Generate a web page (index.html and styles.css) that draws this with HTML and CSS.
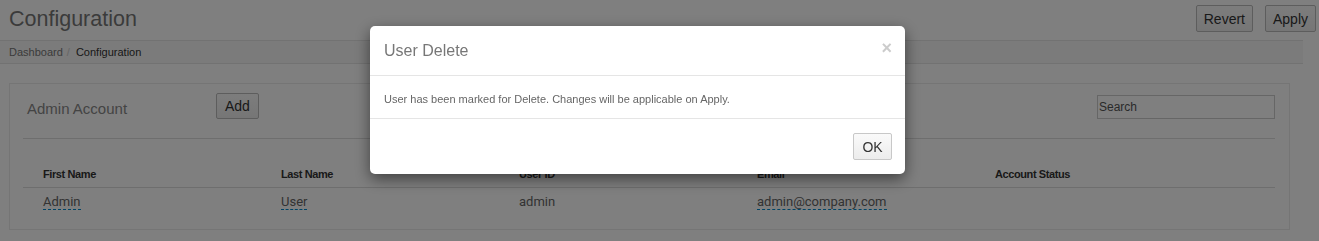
FILE: index.html
```html
<!DOCTYPE html>
<html lang="en">
<head>
    <meta charset="UTF-8">
    <meta name="viewport" content="width=device-width, initial-scale=1.0">
    <title>Configuration</title>
    <link rel="stylesheet" href="styles.css">
</head>
<body>
    <div class="page-header">
        <h1 class="page-title">Configuration</h1>
        <div class="header-actions">
            <button class="btn">Revert</button>
            <button class="btn">Apply</button>
        </div>
    </div>

    <div class="breadcrumb">
        <a href="#" class="crumb-link">Dashboard</a>
        <span class="crumb-sep">/</span>
        <span class="crumb-current">Configuration</span>
    </div>

    <div class="panel">
        <div class="panel-toolbar">
            <div class="toolbar-left">
                <h2 class="panel-title">Admin Account</h2>
                <button class="btn btn-small">Add</button>
            </div>
            <input type="text" class="search-input" placeholder="Search">
        </div>
        <div class="panel-rule"></div>

        <table class="user-table">
            <thead>
                <tr>
                    <th>First Name</th>
                    <th>Last Name</th>
                    <th>User ID</th>
                    <th>Email</th>
                    <th>Account Status</th>
                    <th></th>
                </tr>
            </thead>
            <tbody>
                <tr>
                    <td><a href="#" class="editable">Admin</a></td>
                    <td><a href="#" class="editable">User</a></td>
                    <td>admin</td>
                    <td><a href="#" class="editable">admin@company.com</a></td>
                    <td></td>
                    <td></td>
                </tr>
            </tbody>
        </table>
    </div>

    <!-- Modal de confirmación -->
    <div class="modal-backdrop"></div>
    <div class="modal">
        <div class="modal-header">
            <h4 class="modal-title">User Delete</h4>
            <button class="modal-close">&times;</button>
        </div>
        <div class="modal-body">
            User has been marked for Delete. Changes will be applicable on Apply.
        </div>
        <div class="modal-footer">
            <button class="btn btn-ok">OK</button>
        </div>
    </div>
</body>
</html>
```

FILE: styles.css
```css
/* Estilos básicos */
body, html {
    margin: 0;
    padding: 0;
    background-color: #fff;
    font-family: "Liberation Sans", Arial, sans-serif;
    color: #333;
}

.page-header {
    display: flex;
    justify-content: space-between;
    align-items: flex-start;
    height: 40px;
    padding: 0 3px 0 9px;
    box-sizing: border-box;
}

.page-title {
    margin: 7px 0 0 0;
    font-size: 21.5px;
    font-weight: normal;
    line-height: 25px;
    color: #777;
}

.header-actions {
    display: flex;
    gap: 12px;
    padding-top: 5px;
}

.btn {
    font-family: "Liberation Sans", Arial, sans-serif;
    font-size: 14px;
    color: #333;
    background: linear-gradient(#fafafa, #ececec);
    border: 1px solid #bbb;
    border-radius: 2px;
    height: 27px;
    padding: 0 7px;
    cursor: pointer;
}

.breadcrumb {
    width: 1303px;
    height: 24px;
    box-sizing: border-box;
    border-top: 1px solid #e4e4e4;
    border-bottom: 1px solid #e4e4e4;
    background-color: #f6f6f6;
    padding-left: 9px;
    display: flex;
    align-items: center;
    font-size: 11px;
}

.crumb-link {
    color: #777;
    text-decoration: none;
}

.crumb-sep {
    color: #ccc;
    margin: 0 6px 0 4px;
}

.crumb-current {
    color: #333;
}

.panel {
    margin: 19px 0 0 9px;
    width: 1281px;
    box-sizing: border-box;
    border: 1px solid #eaeaea;
    padding: 9px 14px 13px 13px;
}

.panel-toolbar {
    display: flex;
    justify-content: space-between;
    align-items: center;
    height: 26px;
}

.toolbar-left {
    display: flex;
    align-items: center;
}

.panel-title {
    margin: 4px 0 0 4px;
    width: 189px;
    font-size: 15px;
    font-weight: normal;
    color: #888;
}

.btn-small {
    height: 26px;
    padding: 0 8px;
}

.search-input {
    width: 178px;
    height: 24px;
    box-sizing: border-box;
    border: 1px solid #ccc;
    padding: 0 1px;
    font-size: 12px;
    font-family: "Liberation Sans", Arial, sans-serif;
    margin-top: 1px;
}

.search-input::placeholder {
    color: #555;
}

.panel-rule {
    margin-top: 19px;
    border-top: 1px solid #ddd;
}

.user-table {
    margin-top: 17px;
    width: 100%;
    border-collapse: collapse;
    table-layout: fixed;
}

.user-table th {
    text-align: left;
    font-size: 11px;
    font-weight: bold;
    color: #333;
    letter-spacing: -0.4px;
    width: 218px;
    padding: 10px 0 5px 20px;
    line-height: 16px;
    border-bottom: 1px solid #ddd;
}

.user-table th:last-child {
    width: auto;
}

.user-table td {
    font-family: Roboto, "Liberation Sans", sans-serif;
    font-size: 13px;
    color: #666;
    padding: 5px 0 5px 20px;
    line-height: 18px;
}

.editable {
    color: #666;
    text-decoration: none;
    border-bottom: 1px dashed #08c;
}

/* Ventana modal */
.modal-backdrop {
    position: fixed;
    top: 0;
    left: 0;
    right: 0;
    bottom: 0;
    background-color: rgba(0, 0, 0, 0.5);
}

.modal {
    position: fixed;
    top: 26px;
    left: 370px;
    width: 535px;
    background-color: #fff;
    border-radius: 5px;
    box-shadow: 0 5px 15px rgba(0, 0, 0, 0.5);
}

.modal-header {
    display: flex;
    justify-content: space-between;
    align-items: center;
    height: 50px;
    box-sizing: border-box;
    padding: 0 13px 0 14px;
    border-bottom: 1px solid #e5e5e5;
}

.modal-title {
    margin: 0;
    font-size: 16px;
    font-weight: normal;
    color: #777;
}

.modal-close {
    background: none;
    border: none;
    padding: 0;
    font-size: 18px;
    font-weight: bold;
    color: #ccc;
    cursor: pointer;
    line-height: 1;
    margin-bottom: 6px;
}

.modal-body {
    height: 43px;
    box-sizing: border-box;
    padding: 17px 14px 0 14px;
    font-size: 11px;
    color: #666;
    border-bottom: 1px solid #e5e5e5;
}

.modal-footer {
    display: flex;
    justify-content: flex-end;
    height: 55px;
    box-sizing: border-box;
    padding: 14px 13px 0 0;
}

.btn-ok {
    height: 27px;
    width: 39px;
    padding: 0;
    font-size: 14px;
    border-color: #c8c8c8;
}
```
